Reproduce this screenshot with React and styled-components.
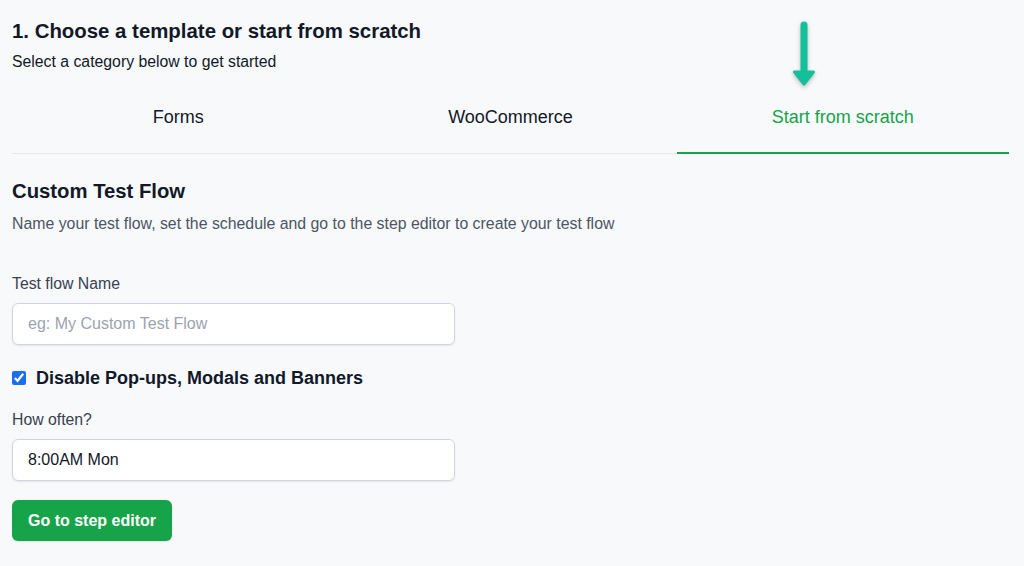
import React from 'react';
import styled, { createGlobalStyle } from 'styled-components';

const GlobalStyle = createGlobalStyle`
  html, body {
    margin: 0;
    padding: 0;
    background: #f8f9fb;
    font-family: "Liberation Sans", Arial, sans-serif;
    color: #111827;
  }
`;

const Page = styled.div`
  padding: 19px 15px 0 12px;
  width: 1024px;
  height: 566px;
  box-sizing: border-box;
  overflow: hidden;
`;

const Title = styled.h1`
  margin: 0;
  font-size: 20.4px;
  font-weight: 700;
  line-height: 24px;
  color: #111827;
`;

const Subtitle = styled.p`
  margin: 9px 0 0;
  font-size: 15.8px;
  line-height: 20px;
  color: #111827;
`;

const Tabs = styled.div`
  display: grid;
  grid-template-columns: repeat(3, 1fr);
  margin-top: 18px;
  border-bottom: 1px solid #e5e7eb;
`;

const Tab = styled.div`
  position: relative;
  text-align: center;
  font-size: 18px;
  line-height: 22px;
  padding: 16px 0 24px;
  color: ${p => (p.active ? '#16a34a' : '#111827')};
  border-bottom: 2px solid ${p => (p.active ? '#16a34a' : 'transparent')};
  margin-bottom: -1px;
`;

const Arrow = styled.svg`
  position: absolute;
  left: 50%;
  top: -69px;
  margin-left: -51px;
  filter: drop-shadow(0 2px 2px rgba(0, 0, 0, 0.25));
`;

const Section = styled.section`
  padding-top: 25px;
`;

const SectionTitle = styled.h2`
  margin: 0;
  font-size: 20.3px;
  line-height: 24px;
  font-weight: 700;
  color: #111827;
`;

const SectionText = styled.p`
  margin: 11px 0 0;
  font-size: 15.85px;
  line-height: 20px;
  color: #4b5563;
`;

const Field = styled.div`
  display: flex;
  flex-direction: column;
  gap: 9px;
  margin-top: ${p => p.top}px;
`;

const Label = styled.label`
  font-size: 15.8px;
  line-height: 20px;
  color: #374151;
`;

const Input = styled.input`
  width: 443px;
  height: 42px;
  box-sizing: border-box;
  padding: 0 15px;
  border: 1px solid #d1d5db;
  border-radius: 6px;
  background: #fff;
  box-shadow: 0 1px 2px rgba(0, 0, 0, 0.08);
  font-family: inherit;
  font-size: 16px;
  color: #111827;
  outline: none;

  &::placeholder {
    color: #9ca3af;
  }
`;

const CheckRow = styled.label`
  display: flex;
  align-items: center;
  gap: 10px;
  height: 22px;
  margin-top: 22px;
  font-size: 18px;
  font-weight: 700;
  color: #111827;
`;

const Check = styled.input`
  margin: 0;
  width: 14px;
  height: 14px;
  accent-color: #1a6ff0;
`;

const Button = styled.button`
  margin-top: 19px;
  height: 41px;
  padding: 0 16px;
  border: none;
  border-radius: 6px;
  background: #17a34a;
  color: #fff;
  font-family: inherit;
  font-size: 16px;
  font-weight: 700;
  box-shadow: 0 1px 2px rgba(0, 0, 0, 0.1);
`;

export default function App() {
  return (
    <Page>
      <GlobalStyle />
      <Title>1. Choose a template or start from scratch</Title>
      <Subtitle>Select a category below to get started</Subtitle>
      <Tabs>
        <Tab>Forms</Tab>
        <Tab>WooCommerce</Tab>
        <Tab active>
          <Arrow width="24" height="66" viewBox="0 0 24 66">
            <path d="M12 4 V54" stroke="#14bf9a" strokeWidth="7" strokeLinecap="round" fill="none" />
            <path d="M2.5 51 L21.5 51 L12 63 Z" fill="#14bf9a" stroke="#14bf9a" strokeWidth="3" strokeLinejoin="round" />
          </Arrow>
          Start from scratch
        </Tab>
      </Tabs>
      <Section>
        <SectionTitle>Custom Test Flow</SectionTitle>
        <SectionText>Name your test flow, set the schedule and go to the step editor to create your test flow</SectionText>
        <Field top={40}>
          <Label>Test flow Name</Label>
          <Input placeholder="eg: My Custom Test Flow" />
        </Field>
        <CheckRow>
          <Check type="checkbox" defaultChecked />
          Disable Pop-ups, Modals and Banners
        </CheckRow>
        <Field top={21}>
          <Label>How often?</Label>
          <Input defaultValue="8:00AM Mon" />
        </Field>
        <Button>Go to step editor</Button>
      </Section>
    </Page>
  );
}
